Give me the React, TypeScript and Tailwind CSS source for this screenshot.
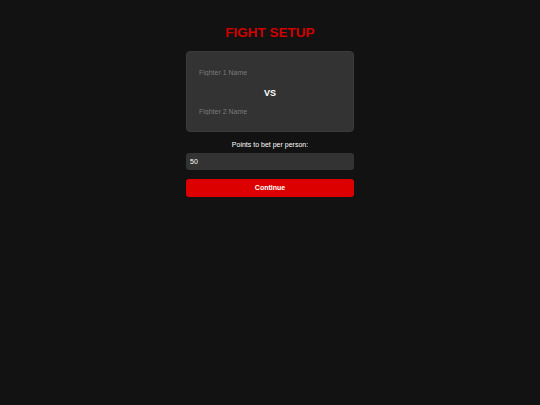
export default function App() {
  return (
    <div className="min-h-[405px] w-full bg-[#121212] font-['Liberation_Sans',Arial,sans-serif] text-white">
      <div className="mx-auto flex w-[168px] flex-col pt-[25px]">
        <h1 className="text-center text-[13.5px] font-bold leading-[16px] text-[#d00000]">FIGHT SETUP</h1>

        {/* Fighters */}
        <div className="mt-[10px] flex flex-col rounded-[4px] border border-[#3a3a3a] bg-[#333333] px-[4px] pt-[7px] pb-[8px]">
          <input
            className="h-[26px] w-full bg-transparent px-[8px] text-[7px] text-white placeholder:text-[#7a7a7a] outline-none"
            placeholder="Fighter 1 Name"
          />
          <div className="h-[15px] pt-[2px] text-center text-[9px] font-bold leading-[13px]">VS</div>
          <input
            className="h-[23px] w-full bg-transparent px-[8px] text-[7px] text-white placeholder:text-[#7a7a7a] outline-none"
            placeholder="Fighter 2 Name"
          />
        </div>

        <label className="mt-[8px] text-center text-[7px] leading-[9px]">Points to bet per person:</label>
        <input
          className="mt-[4px] h-[17px] w-full rounded-[3px] bg-[#333333] px-[4px] text-[7px] text-white outline-none"
          defaultValue="50"
        />

        <button className="mt-[9px] h-[18px] w-full rounded-[3px] bg-[#dd0000] text-[7px] font-bold text-white">
          Continue
        </button>
      </div>
    </div>
  );
}
